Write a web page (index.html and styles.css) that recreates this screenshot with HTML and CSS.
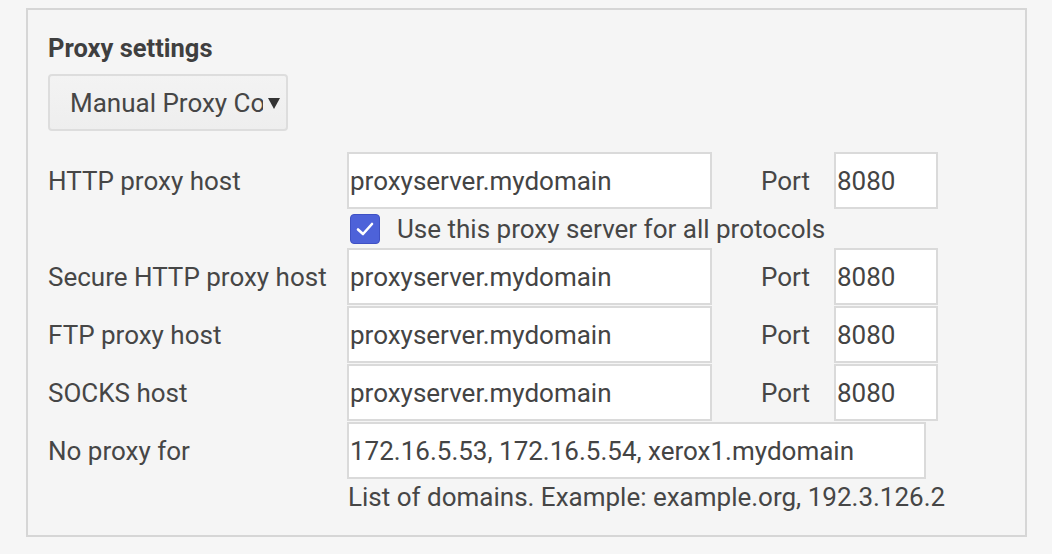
FILE: index.html
```html
<!DOCTYPE html>
<html lang="en">

<head>
  <meta charset="UTF-8">
  <meta name="viewport" content="width=device-width, initial-scale=1.0">
  <title>Proxy settings</title>
  <link rel="stylesheet" href="styles.css">
</head>

<body>
  <div class="panel">
    <h2 class="title">Proxy settings</h2>

    <div class="select">
      <span class="select-text">Manual Proxy Configuration</span>
      <svg class="select-arrow" width="12" height="12" viewBox="0 0 12 12">
        <path d="M0 1 L12 1 L6 12 Z" fill="#333"/>
      </svg>
    </div>

    <div class="form">
      <label class="label">HTTP proxy host</label>
      <div class="input host">proxyserver.mydomain</div>
      <label class="port-label">Port</label>
      <div class="input port">8080</div>

      <div class="check-row">
        <span class="checkbox">
          <svg width="22" height="22" viewBox="0 0 22 22">
            <path d="M4 11.5 L9 16 L18 6" fill="none" stroke="#fff" stroke-width="2.6" stroke-linecap="round" stroke-linejoin="round"/>
          </svg>
        </span>
        <span class="check-text">Use this proxy server for all protocols</span>
      </div>

      <label class="label">Secure HTTP proxy host</label>
      <div class="input host">proxyserver.mydomain</div>
      <label class="port-label">Port</label>
      <div class="input port">8080</div>

      <label class="label">FTP proxy host</label>
      <div class="input host">proxyserver.mydomain</div>
      <label class="port-label">Port</label>
      <div class="input port">8080</div>

      <label class="label">SOCKS host</label>
      <div class="input host">proxyserver.mydomain</div>
      <label class="port-label">Port</label>
      <div class="input port">8080</div>

      <label class="label">No proxy for</label>
      <div class="input wide">172.16.5.53, 172.16.5.54, xerox1.mydomain</div>
      <p class="hint">List of domains. Example: example.org, 192.3.126.2</p>
    </div>
  </div>
</body>

</html>
```

FILE: styles.css
```css
* {
  margin: 0;
  padding: 0;
  box-sizing: border-box;
}

body {
  background: #f6f6f6;
  font-family: Roboto, "Liberation Sans", sans-serif;
  color: #464646;
}

.panel {
  width: 1001px;
  height: 529px;
  margin: 8px 0 0 26px;
  padding: 24px 0 0 20px;
  border: 2px solid #d6d6d6;
  background: #f5f5f5;
}

.title {
  font-size: 25.5px;
  font-weight: bold;
  line-height: 28px;
  color: #3f3f3f;
}

/* --------選單--------- */
.select {
  display: flex;
  align-items: center;
  width: 240px;
  height: 57px;
  margin-top: 12px;
  padding: 0 6px 0 20px;
  border: 2px solid #dddddd;
  border-radius: 4px;
  background: linear-gradient(#f3f3f3, #eeeeee);
  font-size: 26px;
}

.select-text {
  width: 193px;
  overflow: hidden;
  white-space: nowrap;
}

.select-arrow {
  margin-left: 5px;
}

/* --------表單--------- */
.form {
  display: grid;
  grid-template-columns: 299px 365px 122px 104px;
  align-items: center;
  margin-top: 21px;
  font-size: 26px;
}

.input {
  height: 57px;
  margin-bottom: 1px;
  display: flex;
  align-items: center;
  padding-left: 1px;
  border: 2px solid #dadada;
  background: #ffffff;
  color: #444444;
  white-space: nowrap;
}

.port-label {
  padding-left: 49px;
}

.wide {
  grid-column: 2 / 4;
  width: 579px;
}

.check-row {
  grid-column: 2 / 5;
  display: flex;
  align-items: center;
  height: 37px;
  margin-bottom: 1px;
}

.checkbox {
  display: flex;
  align-items: center;
  justify-content: center;
  width: 30px;
  height: 30px;
  margin-left: 3px;
  border-radius: 4px;
  border: 1px solid #3f51c4;
  background: #4d62d9;
}

.check-text {
  margin-left: 17px;
}

.hint {
  grid-column: 2 / 5;
  margin-top: 2px;
  padding-left: 1px;
  line-height: 30px;
  white-space: nowrap;
}
```
